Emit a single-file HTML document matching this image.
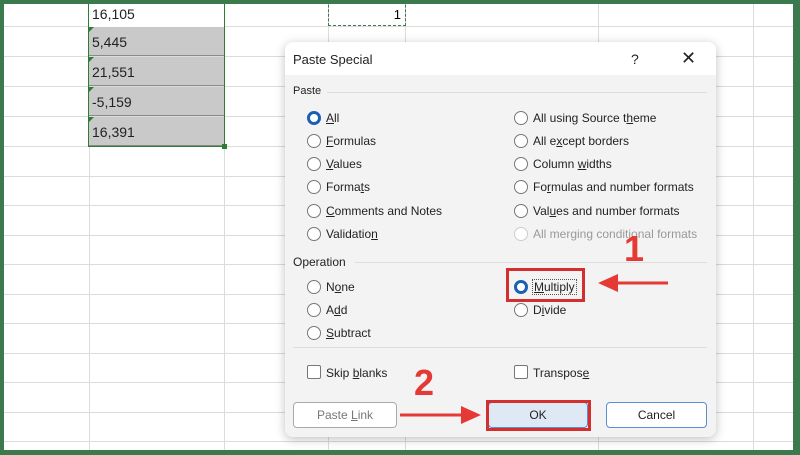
<!DOCTYPE html>
<html><head><meta charset="utf-8"><style>
*{margin:0;padding:0;box-sizing:border-box}
body{width:800px;height:455px;overflow:hidden;background:#3a7a4d;font-family:"Liberation Sans",sans-serif;position:relative}
#sheet{position:absolute;left:4px;top:4px;width:789px;height:446px;background:#fff;overflow:hidden}
.h{position:absolute;left:0;width:789px;height:1px;background:#dcdcdc}
.v{position:absolute;top:0;height:446px;width:1px;background:#dcdcdc}
.cell{position:absolute;left:85px;width:135px;height:29px;background:#c9c9c9;border-bottom:1px solid #8a8a8a;font-size:14px;color:#222;padding:7px 0 0 3px}
.cell:before{content:"";position:absolute;left:0;top:0;border-top:5px solid #2e7d32;border-right:5px solid transparent}
#dlg{position:absolute;left:285px;top:42px;width:431px;height:395px;background:#f3f3f3;border-radius:8px;box-shadow:0 2px 10px rgba(0,0,0,.25);overflow:hidden;font-size:12px;color:#222}
#title{position:absolute;left:0;top:0;width:100%;height:33px;background:#fff}
.t{position:absolute;white-space:nowrap}
.r{position:absolute;width:14px;height:14px;border:1px solid #777;border-radius:50%;background:#fff}
.r.on{border:3.5px solid #1a5fb4}
.cb{position:absolute;width:14px;height:14px;border:1px solid #777;background:#fff;border-radius:2px}
.btn{position:absolute;height:26px;border:1px solid #aaa;border-radius:4px;background:#fff;text-align:center;line-height:24px;font-size:12px}
.red{position:absolute;border:3px solid #d32f2f}
.num{position:absolute;color:#e53935;font-weight:bold;font-size:36px}
</style></head><body>
<div id="sheet">
<div class="h" style="top:22px"></div><div class="h" style="top:52px"></div><div class="h" style="top:82px"></div><div class="h" style="top:112px"></div><div class="h" style="top:142px"></div><div class="h" style="top:172px"></div><div class="h" style="top:201px"></div><div class="h" style="top:231px"></div><div class="h" style="top:260px"></div><div class="h" style="top:290px"></div><div class="h" style="top:319px"></div><div class="h" style="top:349px"></div><div class="h" style="top:378px"></div><div class="h" style="top:408px"></div><div class="h" style="top:437px"></div>
<div class="v" style="left:85px"></div><div class="v" style="left:220px"></div><div class="v" style="left:324px"></div><div class="v" style="left:401px"></div><div class="v" style="left:594px"></div><div class="v" style="left:749px"></div>
<div style="position:absolute;left:85px;top:-4px;width:135px;height:27px;background:#fff;font-size:14px;padding:6px 0 0 3px;color:#222">16,105</div>
<div class="cell" style="top:23px">5,445</div>
<div class="cell" style="top:53px">21,551</div>
<div class="cell" style="top:83px">-5,159</div>
<div class="cell" style="top:113px">16,391</div>
<div style="position:absolute;left:84px;top:-4px;width:137px;height:147px;border:1px solid #2e7d32"></div>
<div style="position:absolute;left:218px;top:140px;width:5px;height:5px;background:#2e7d32"></div>
<div style="position:absolute;left:324px;top:-4px;width:78px;height:26px;border:1.5px dashed #3a7a4d;font-size:13px;text-align:right;padding:6px 4px 0 0">1</div>
</div>

<div id="dlg">
<div id="title"></div>
<div class="t" style="left:8px;top:10px;font-size:13px">Paste Special</div>
<div class="t" style="left:346px;top:9px;font-size:14px">?</div>
<div class="t" style="left:396px;top:6px;font-size:18px">✕</div>
<div class="t" style="left:8px;top:43px;font-size:11px">Paste</div>
<div style="position:absolute;left:42px;top:50px;width:380px;height:1px;background:#ddd"></div>

<div class="r on" style="left:22px;top:69px"></div><div class="t" style="left:41px;top:69px"><u>A</u>ll</div>
<div class="r" style="left:22px;top:92px"></div><div class="t" style="left:41px;top:92px"><u>F</u>ormulas</div>
<div class="r" style="left:22px;top:115px"></div><div class="t" style="left:41px;top:115px"><u>V</u>alues</div>
<div class="r" style="left:22px;top:138px"></div><div class="t" style="left:41px;top:138px">Forma<u>t</u>s</div>
<div class="r" style="left:22px;top:162px"></div><div class="t" style="left:41px;top:162px"><u>C</u>omments and Notes</div>
<div class="r" style="left:22px;top:185px"></div><div class="t" style="left:41px;top:185px">Validatio<u>n</u></div>

<div class="r" style="left:229px;top:69px"></div><div class="t" style="left:248px;top:69px">All using Source t<u>h</u>eme</div>
<div class="r" style="left:229px;top:92px"></div><div class="t" style="left:248px;top:92px">All e<u>x</u>cept borders</div>
<div class="r" style="left:229px;top:115px"></div><div class="t" style="left:248px;top:115px">Column <u>w</u>idths</div>
<div class="r" style="left:229px;top:138px"></div><div class="t" style="left:248px;top:138px">Fo<u>r</u>mulas and number formats</div>
<div class="r" style="left:229px;top:162px"></div><div class="t" style="left:248px;top:162px">Val<u>u</u>es and number formats</div>
<div class="r" style="left:229px;top:185px;border-color:#ccc"></div><div class="t" style="left:248px;top:185px;color:#999">All merging conditional formats</div>

<div class="t" style="left:8px;top:213px">Operation</div>
<div style="position:absolute;left:70px;top:220px;width:352px;height:1px;background:#ddd"></div>
<div class="r" style="left:22px;top:238px"></div><div class="t" style="left:41px;top:238px">N<u>o</u>ne</div>
<div class="r" style="left:22px;top:261px"></div><div class="t" style="left:41px;top:261px">A<u>d</u>d</div>
<div class="r" style="left:22px;top:284px"></div><div class="t" style="left:41px;top:284px"><u>S</u>ubtract</div>
<div class="r on" style="left:229px;top:238px"></div><div class="t" style="left:247px;top:237px;border:1px dotted #555;padding:0 1px"><u>M</u>ultiply</div>
<div class="r" style="left:229px;top:261px"></div><div class="t" style="left:248px;top:261px">D<u>i</u>vide</div>
<div style="position:absolute;left:8px;top:305px;width:414px;height:1px;background:#ddd"></div>

<div class="cb" style="left:22px;top:323px"></div><div class="t" style="left:41px;top:324px">Skip <u>b</u>lanks</div>
<div class="cb" style="left:229px;top:323px"></div><div class="t" style="left:248px;top:324px">Transpos<u>e</u></div>

<div class="btn" style="left:8px;top:360px;width:104px;color:#777">Paste <u>L</u>ink</div>
<div class="btn" style="left:203px;top:360px;width:100px;background:#dfe9f5;border-color:#5a8ed0">OK</div>
<div class="btn" style="left:321px;top:360px;width:101px;border-color:#5a8ed0">Cancel</div>
</div>

<div class="red" style="left:506px;top:268px;width:79px;height:34px"></div>
<div class="red" style="left:486px;top:400px;width:105px;height:31px"></div>
<div class="num" style="left:624px;top:228px">1</div>
<div class="num" style="left:414px;top:362px">2</div>
<svg style="position:absolute;left:0;top:0" width="800" height="455">
<line x1="668" y1="283" x2="615" y2="283" stroke="#e53935" stroke-width="3"/>
<polygon points="598,283 618,274 618,292" fill="#e53935"/>
<line x1="400" y1="415" x2="463" y2="415" stroke="#e53935" stroke-width="3"/>
<polygon points="481,415 461,406 461,424" fill="#e53935"/>
</svg>
</body></html>
